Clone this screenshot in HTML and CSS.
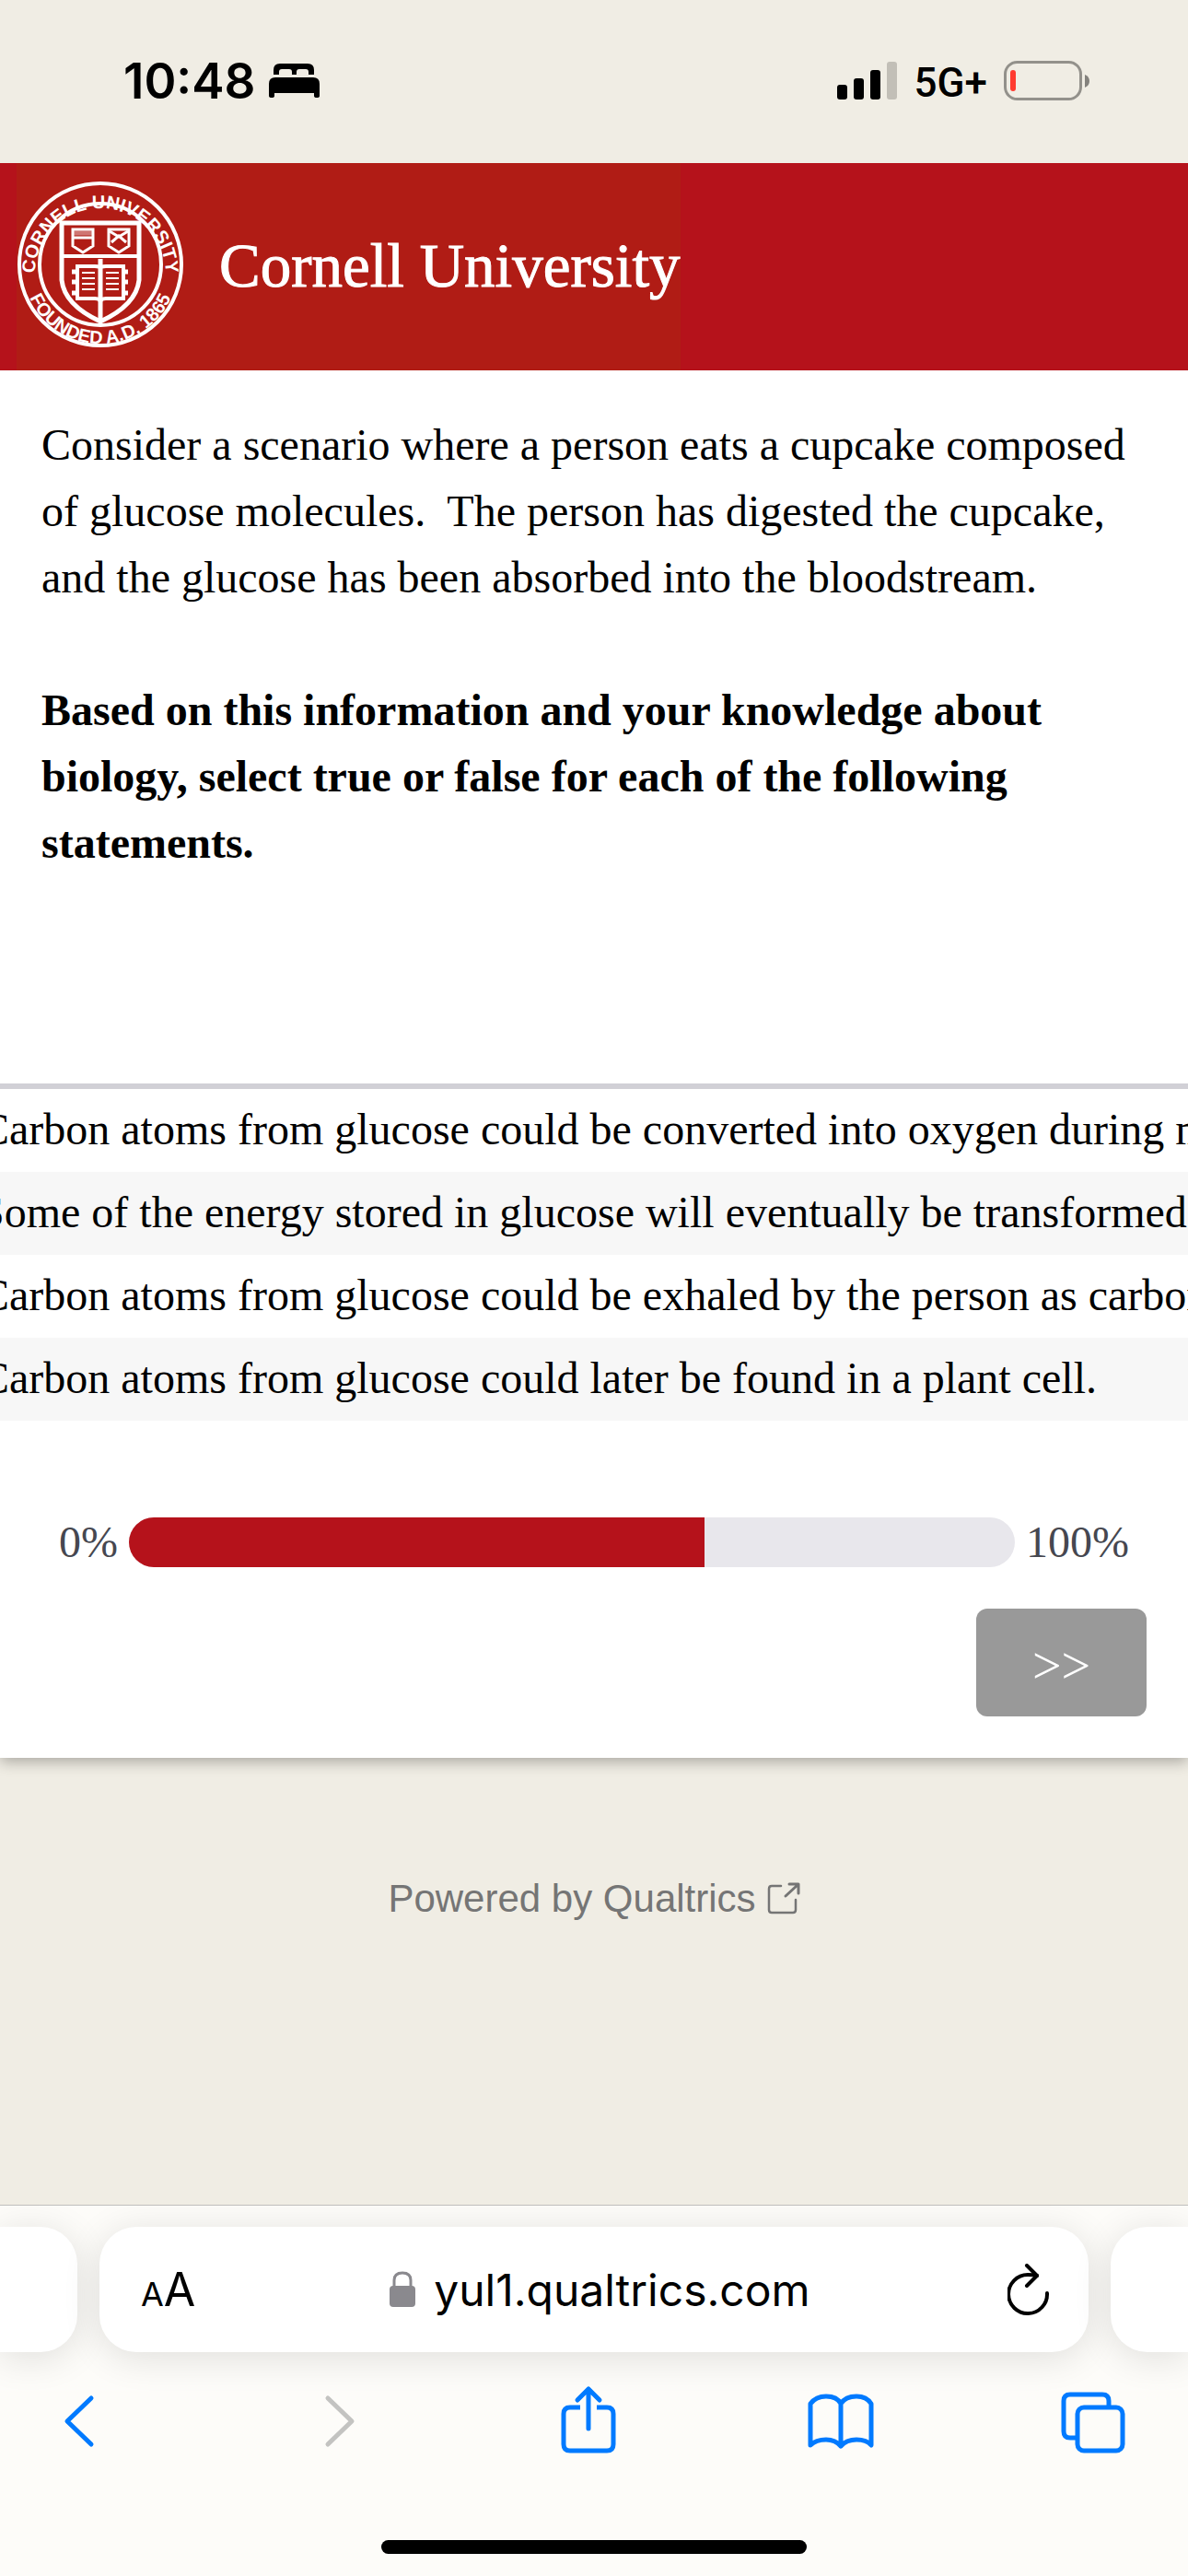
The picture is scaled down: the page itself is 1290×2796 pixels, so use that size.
FILE: index.html
```html
<!DOCTYPE html>
<html lang="en">
<head>
    <meta charset="UTF-8" />
    <meta name="viewport" content="width=device-width, initial-scale=1.0"/>
    <title>Qualtrics Survey</title>
    <link rel="stylesheet" href="styles.css">
</head>
<body>

    <!-- Status Bar -->
    <div class="status-bar">
        <div class="status-left">
            <span class="time">10:48</span>
            <svg class="bed-icon" width="56" height="38" viewBox="0 0 56 38">
                <path d="M5 12V7q0-7 7-7h30q7 0 7 7v5h-6V9q0-3-3-3h-7q-3 0-3 3v3h-5V9q0-3-3-3h-8q-3 0-3 3v3z"/>
                <path d="M0 22q0-7 7-7h41q7 0 7 7v13q0 2-3 2t-3-2v-3H6v3q0 2-3 2t-3-2z"/>
            </svg>
        </div>
        <div class="status-right">
            <svg width="66" height="42" viewBox="0 0 66 42">
                <rect x="0" y="25" width="11" height="16" rx="3"/>
                <rect x="18" y="18" width="11" height="23" rx="3"/>
                <rect x="36" y="9" width="11" height="32" rx="3"/>
                <rect x="54" y="0" width="11" height="41" rx="3" fill="#c2bfb7"/>
            </svg>
            <span class="network">5G+</span>
            <svg width="94" height="44" viewBox="0 0 94 44">
                <rect x="1.500" y="1.500" width="82" height="40" rx="13" fill="none" stroke="#93918b" stroke-width="3"/>
                <path d="M88 15q5 2 5 7t-5 7z" fill="#84827d"/>
                <rect x="7" y="10" width="6" height="23" rx="3" fill="#ff3b30"/>
            </svg>
        </div>
    </div>

    <!-- University Header -->
    <header class="header">
        <div class="logo">
            <svg width="182" height="182" viewBox="0 0 182 182" fill="none" stroke="#fff">
                <defs>
                    <path id="sealTop" d="M20 100A71 71 0 1 1 162 100"/>
                    <path id="sealBottom" d="M8 105A84 84 0 0 0 174 105"/>
                </defs>
                <circle cx="91" cy="90" r="88" stroke-width="4"/>
                <circle cx="91" cy="90" r="66" stroke-width="4"/>
                <g class="seal-text">
                    <text><textPath href="#sealTop" startOffset="50%">CORNELL UNIVERSITY</textPath></text>
                    <text><textPath href="#sealBottom" startOffset="50%">FOUNDED A.D. 1865</textPath></text>
                </g>
                <path d="M49 45H133V107Q130 134 91 152Q52 134 49 107Z" stroke-width="5"/>
                <path d="M49 81H133" stroke-width="4"/>
                <path d="M61 52H83V70L72 77L61 70ZM61 61H83M100 52H122V70L111 77L100 70Z" stroke-width="3"/>
                <path d="M62 56H82" stroke-width="5" opacity=".4"/>
                <path d="M101 54L111 60L121 54M103 66L111 59L119 66" stroke-width="3"/>
                <path d="M66 92H85Q91 92 91 94Q91 92 97 92H116V127H97Q91 127 91 131Q91 127 85 127H66Z" stroke-width="4"/>
                <path d="M91 84V152" stroke-width="5"/>
                <path d="M71 99H85M71 105H85M71 111H85M71 117H85M97 99H111M97 105H111M97 111H111M97 117H111" stroke-width="2"/>
                <path d="M60 98H66M60 109H66M60 121H66M116 98H121M116 109H121M116 121H121" stroke-width="5"/>
            </svg>
            <span class="logo-name">Cornell University</span>
        </div>
    </header>

    <!-- Survey -->
    <main class="survey">
        <div class="question">
            <p>Consider a scenario where a person eats a cupcake composed of glucose molecules.&nbsp; The person has digested the cupcake, and the glucose has been absorbed into the bloodstream.</p>
            <p><strong>Based on this information and your knowledge about biology, select true or false for each of the following statements.</strong></p>
        </div>

        <div class="matrix">
            <table class="statements">
                <tbody>
                    <tr><th scope="row">Carbon atoms from glucose could be converted into oxygen during metabolism.</th></tr>
                    <tr><th scope="row">Some of the energy stored in glucose will eventually be transformed into heat.</th></tr>
                    <tr><th scope="row">Carbon atoms from glucose could be exhaled by the person as carbon dioxide.</th></tr>
                    <tr><th scope="row">Carbon atoms from glucose could later be found in a plant cell.</th></tr>
                </tbody>
            </table>
        </div>

        <div class="progress-row">
            <span>0%</span>
            <progress class="progress" value="65" max="100" aria-label="Survey completion"></progress>
            <span>100%</span>
        </div>

        <div class="buttons">
            <button type="button" class="next-button" aria-label="Next">&gt;&gt;</button>
        </div>
    </main>

    <footer class="powered">
        <a href="#">
            Powered by Qualtrics
            <svg width="36" height="36" viewBox="0 0 36 36" fill="none" stroke="#757575" stroke-width="2.500" stroke-linecap="round" stroke-linejoin="round">
                <path d="M15 4H5Q2 4 2 7V30Q2 33 5 33H28Q31 33 31 30V19"/>
                <path d="M24 2H34V12M33 3L20 15" stroke-width="3"/>
            </svg>
        </a>
    </footer>

    <!-- Browser Bar -->
    <div class="browser-bar">
        <div class="tabs">
            <div class="tab tab-prev"></div>
            <div class="tab tab-current">
                <button type="button" class="text-size" aria-label="Page settings"><small>A</small>A</button>
                <label class="address">
                    <svg width="28" height="40" viewBox="0 0 28 40">
                        <path d="M5 17V10Q5 2 14 2T23 10V17" fill="none" stroke="#8a898e" stroke-width="3"/>
                        <rect x="0" y="16" width="28" height="23" rx="4" fill="#8a898e"/>
                    </svg>
                    <input type="text" value="yul1.qualtrics.com" aria-label="Address">
                </label>
                <button type="button" class="reload" aria-label="Reload">
                    <svg width="46" height="56" viewBox="0 0 46 56" fill="none" stroke="#000" stroke-width="4" stroke-linecap="round" stroke-linejoin="round">
                        <path d="M43 32A21 21 0 1 1 22 12Q28 12 32 13"/>
                        <path d="M21 2L32 13L21 24"/>
                    </svg>
                </button>
            </div>
            <div class="tab tab-next"></div>
        </div>

        <nav class="toolbar">
            <button type="button" aria-label="Back">
                <svg width="76" height="76" viewBox="0 0 76 76">
                    <path d="M51 14L25 39L51 64"/>
                </svg>
            </button>
            <button type="button" aria-label="Forward" disabled>
                <svg width="76" height="76" viewBox="0 0 76 76">
                    <path d="M32 14L58 39L32 64"/>
                </svg>
            </button>
            <button type="button" aria-label="Share">
                <svg width="76" height="76" viewBox="0 0 76 76">
                    <path d="M31 24H20Q13 24 13 31V64Q13 71 20 71H60Q67 71 67 64V31Q67 24 60 24H49" stroke-linecap="butt"/>
                    <path d="M40 47V4M28 16L40 4L52 16"/>
                </svg>
            </button>
            <button type="button" aria-label="Bookmarks">
                <svg width="76" height="76" viewBox="0 0 76 76">
                    <path d="M38 20Q34 12 22 12Q11 12 5 20V65Q11 59 22 59Q32 59 38 66Q44 59 55 59Q66 59 71 65V20Q66 12 55 12Q43 12 38 20V66"/>
                </svg>
            </button>
            <button type="button" aria-label="Tabs">
                <svg width="76" height="76" viewBox="0 0 76 76">
                    <rect x="20" y="24" width="49" height="47" rx="7"/>
                    <path d="M20 57H12Q5 57 5 50V17Q5 10 12 10H47Q54 10 54 17V23" stroke-linecap="butt"/>
                </svg>
            </button>
        </nav>

        <div class="home-indicator"></div>
    </div>

</body>
</html>
```

FILE: styles.css
```css
* {
    margin: 0;
    padding: 0;
    box-sizing: border-box;
}

body {
    font-family: "Liberation Serif", "Times New Roman", serif;
    font-size: 48px;
    line-height: 72px;
    background: #f0ede4;
    color: #000;
    min-height: 100vh;
    display: flex;
    flex-direction: column;
    overflow-x: hidden;
}

svg {
    display: block;
    flex-shrink: 0;
}

button {
    border: none;
    background: none;
    cursor: pointer;
}

/* Status bar */
.status-bar {
    height: 177px;
    padding: 0 106px 2px 134px;
    display: flex;
    justify-content: space-between;
    align-items: center;
    font-family: Inter, sans-serif;
}

.status-left,
.status-right {
    display: flex;
    align-items: center;
}

.status-left {
    gap: 14px;
}

.status-right {
    gap: 18px;
}

.time {
    font-size: 53px;
    font-weight: 600;
}

.network {
    font-family: Roboto, sans-serif;
    font-size: 44px;
    font-weight: 500;
    padding-top: 4px;
}

/* Header */
.header {
    background: #b5121b;
    padding: 0 18px;
    display: flex;
}

.logo {
    background: #b01c15;
    height: 225px;
    padding-bottom: 3px;
    display: flex;
    align-items: center;
    gap: 38px;
}

.logo-name {
    color: #fff;
    font-size: 67px;
    -webkit-text-stroke: 1px #fff;
    white-space: nowrap;
}

.seal-text {
    fill: #fff;
    stroke: none;
    font-family: "Liberation Sans", Arial, sans-serif;
    font-size: 20px;
    font-weight: bold;
    text-anchor: middle;
}

/* Survey */
.survey {
    background: #fff;
    padding-bottom: 45px;
    box-shadow: 0 4px 15px rgba(0, 0, 0, 0.3);
    clip-path: inset(0 0 -40px 0);
}

.question {
    padding: 45px 45px 0;
}

.question p + p {
    margin-top: 72px;
}

.matrix {
    margin-top: 225px;
    border-top: 6px solid #d1d0d6;
    overflow: hidden;
}

/* the matrix is scrolled a little to the right */
.statements {
    width: calc(100% + 22px);
    margin-left: -22px;
    border-collapse: collapse;
}

.statements th {
    padding: 8px 0 10px;
    font-weight: normal;
    text-align: left;
    white-space: nowrap;
}

.statements tr:nth-child(even) {
    background: #f7f7f7;
}

.progress-row {
    display: flex;
    align-items: center;
    gap: 12px;
    padding: 96px 64px 36px;
    color: #464750;
}

.progress {
    flex: 1;
    min-width: 0;
    height: 54px;
    border: none;
    border-radius: 27px;
    overflow: hidden;
    appearance: none;
    -webkit-appearance: none;
    background: #e8e7ec;
}

.progress::-webkit-progress-bar {
    background: #e8e7ec;
}

.progress::-webkit-progress-value {
    background: #b5121b;
}

.buttons {
    display: flex;
    justify-content: flex-end;
    padding: 0 45px;
}

.next-button {
    width: 185px;
    height: 117px;
    padding-top: 6px;
    border-radius: 12px;
    background: #999;
    color: #fff;
    font-family: inherit;
    font-size: 56px;
}

/* Footer */
.powered {
    padding: 117px 0;
    display: flex;
    justify-content: center;
    font-family: "Liberation Sans", Arial, sans-serif;
    font-size: 42px;
}

.powered a {
    display: flex;
    align-items: center;
    gap: 12px;
    color: #757575;
    text-decoration: none;
}

/* Browser bar */
.browser-bar {
    margin-top: auto;
    padding: 23px 0 24px;
    border-top: 1px solid #bfbfbd;
    background: #fdfcf9;
    font-family: Inter, sans-serif;
    overflow: hidden;
}

.tabs {
    display: grid;
    grid-template-columns: 84px 1fr 84px;
    gap: 24px;
}

.tab {
    height: 136px;
    border-radius: 40px;
    background: #fff;
    box-shadow: 0 6px 40px rgba(0, 0, 0, 0.12);
}

.tab-prev {
    border-top-left-radius: 0;
    border-bottom-left-radius: 0;
}

.tab-next {
    border-top-right-radius: 0;
    border-bottom-right-radius: 0;
}

.tab-current {
    display: flex;
    align-items: center;
    justify-content: space-between;
    padding: 0 42px 0 45px;
}

.text-size {
    font-family: inherit;
    font-size: 50px;
}

.text-size small {
    font-size: 36px;
}

.address {
    display: flex;
    align-items: center;
    gap: 20px;
}

.address input {
    width: 412px;
    border: none;
    outline: none;
    background: none;
    font-family: inherit;
    font-size: 48px;
}

.toolbar {
    display: flex;
    justify-content: space-between;
    padding: 36px 64px 0 48px;
}

.toolbar button {
    color: #007aff;
}

.toolbar button:disabled {
    color: #c3c3c1;
}

.toolbar svg {
    fill: none;
    stroke: currentColor;
    stroke-width: 5;
    stroke-linecap: round;
    stroke-linejoin: round;
}

.home-indicator {
    width: 462px;
    height: 15px;
    margin: 92px auto 0;
    border-radius: 8px;
    background: #000;
}
```
